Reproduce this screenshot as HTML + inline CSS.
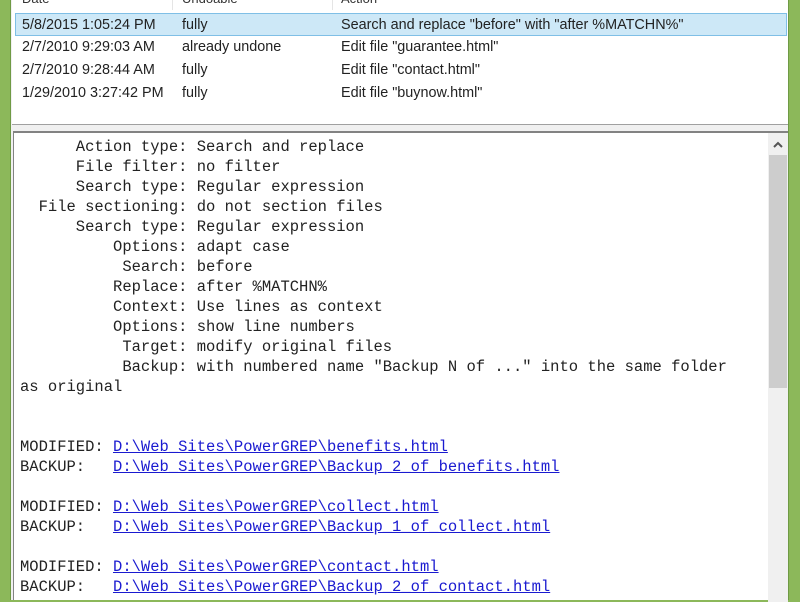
<!DOCTYPE html>
<html><head><meta charset="utf-8"><style>
*{margin:0;padding:0;box-sizing:border-box}
body{width:800px;height:600px;overflow:hidden;background:#8cb85a;position:relative;font-family:"Liberation Sans",sans-serif}
#win{position:absolute;left:10px;top:0;width:779px;height:600px;background:#f0f0f0;border-left:1px solid #6f9a45;border-right:1px solid #6f9a45}
#top{position:absolute;left:1px;top:0;width:776px;height:125px;background:#fff;border-bottom:1px solid #a0a0a0}
.hdr{position:absolute;top:-9px;height:19px;font-size:13px;color:#333}
.sep{border-right:1px solid #e5e5e5}
.row{position:absolute;left:3px;width:772px;height:23px;font-size:14.4px;color:#222}
.row span{position:absolute;top:3px;white-space:nowrap}
.sel{background:#cde8f7;border:1px solid #7fbfe6}
#bot{position:absolute;left:2px;top:131px;width:775px;height:469px;background:#fff;border-left:1px solid #828282;border-top:2px solid #828282}
pre{position:absolute;left:6px;top:4px;font-family:"Liberation Mono",monospace;font-size:15.5px;line-height:20px;color:#222}
a{color:#1a1ad0;text-decoration:underline}
#sb{position:absolute;left:754px;top:0;width:20px;height:469px;background:#f0f0f0}
#thumb{position:absolute;left:1px;top:22px;width:18px;height:233px;background:#cdcdcd}
</style></head><body>
<div id="win">
<div id="top">
<div class="hdr sep" style="left:0;width:161px;padding-left:10px">Date</div>
<div class="hdr sep" style="left:161px;width:160px;padding-left:9px">Undoable</div>
<div class="hdr" style="left:321px;width:200px;padding-left:8px">Action</div>
<div class="row sel" style="top:13px"><span style="left:6px">5/8/2015 1:05:24 PM</span><span style="left:166px">fully</span><span style="left:325px">Search and replace "before" with "after %MATCHN%"</span></div>
<div class="row" style="top:36px"><span style="left:7px">2/7/2010 9:29:03 AM</span><span style="left:167px">already undone</span><span style="left:326px">Edit file "guarantee.html"</span></div>
<div class="row" style="top:59px"><span style="left:7px">2/7/2010 9:28:44 AM</span><span style="left:167px">fully</span><span style="left:326px">Edit file "contact.html"</span></div>
<div class="row" style="top:82px"><span style="left:7px">1/29/2010 3:27:42 PM</span><span style="left:167px">fully</span><span style="left:326px">Edit file "buynow.html"</span></div>
</div>
<div id="bot">
<pre>      Action type: Search and replace
      File filter: no filter
      Search type: Regular expression
  File sectioning: do not section files
      Search type: Regular expression
          Options: adapt case
           Search: before
          Replace: after %MATCHN%
          Context: Use lines as context
          Options: show line numbers
           Target: modify original files
           Backup: with numbered name "Backup N of ..." into the same folder
as original


MODIFIED: <a>D:\Web_Sites\PowerGREP\benefits.html</a>
BACKUP:   <a>D:\Web_Sites\PowerGREP\Backup_2_of_benefits.html</a>

MODIFIED: <a>D:\Web_Sites\PowerGREP\collect.html</a>
BACKUP:   <a>D:\Web_Sites\PowerGREP\Backup_1_of_collect.html</a>

MODIFIED: <a>D:\Web_Sites\PowerGREP\contact.html</a>
BACKUP:   <a>D:\Web_Sites\PowerGREP\Backup_2_of_contact.html</a></pre>
<div id="sb"><svg width="20" height="20" style="position:absolute;top:2px;left:0"><path d="M6 12 L10 8 L14 12" stroke="#555" stroke-width="2" fill="none"/></svg><div id="thumb"></div></div>
</div>
</div>
</body></html>
